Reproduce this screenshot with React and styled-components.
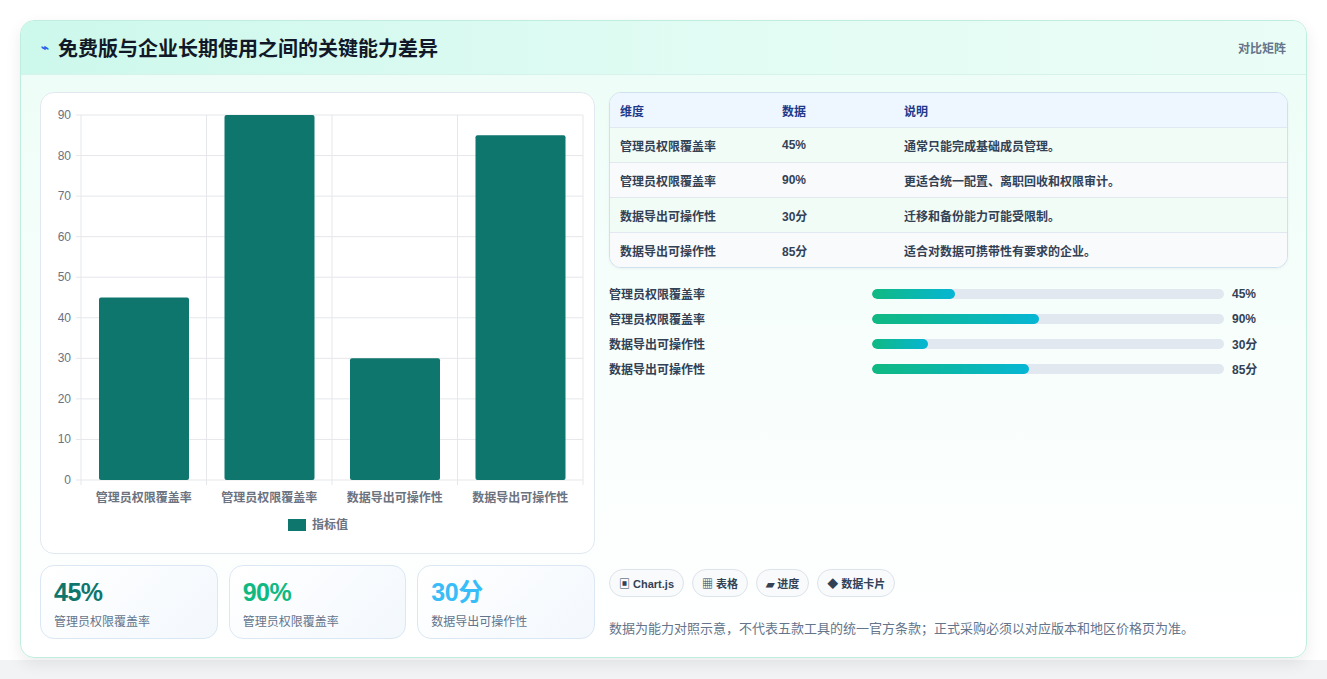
import React from "react";
import styled, { createGlobalStyle } from "styled-components";

const Global = createGlobalStyle`
  html, body { margin: 0; padding: 0; background: #f1f3f4; }
  body { font-family: "Liberation Sans", "Noto Sans CJK SC", sans-serif; }
  * { box-sizing: border-box; }
`;

const Page = styled.div`
  padding: 20px 20px 21px 20px;
  background: linear-gradient(#ffffff 0, #ffffff 660px, #f1f3f4 660px);
`;
const Card = styled.div`
  width: 1287px;
  height: 638px;
  border: 1px solid #bfeee0;
  border-radius: 14px;
  background: linear-gradient(180deg, #ecfdf6 0%, #f6fefb 45%, #ffffff 100%);
  box-shadow: 0 6px 16px rgba(0,0,0,0.08);
  overflow: hidden;
  display: flex;
  flex-direction: column;
`;
const Header = styled.div`
  height: 55px;
  display: flex;
  align-items: center;
  justify-content: space-between;
  padding: 0 20px;
  background: linear-gradient(90deg, #cdf8ec, #e3fcf4 60%, #eafdf6);
  border-bottom: 1px solid #d5f3ea;
`;
const Title = styled.h2`
  margin: 0;
  font-size: 20px;
  font-weight: 700;
  color: #111827;
  display: flex;
  align-items: center;
  gap: 9px;
`;
const Bolt = styled.span`
  color: #2563eb;
  font-size: 13px;
`;
const Tag = styled.span`
  font-size: 12px;
  color: #64748b;
  font-weight: 700;
`;
const Body = styled.div`
  flex: 1;
  display: grid;
  grid-template-columns: 555px 679px;
  gap: 14px;
  padding: 17px 18px 18px 19px;
`;
const Col = styled.div`
  display: flex;
  flex-direction: column;
  gap: 11px;
`;
const ChartCard = styled.div`
  height: 462px;
  background: #fff;
  border: 1px solid #e2e8f0;
  border-radius: 14px;
`;
const Stats = styled.div`
  display: grid;
  grid-template-columns: repeat(3, 1fr);
  gap: 11px;
`;
const Stat = styled.div`
  height: 74px;
  border: 1px solid #dbe7f3;
  border-radius: 14px;
  background: linear-gradient(135deg, #ffffff, #f3f8fd);
  padding: 10px 13px;
`;
const StatNum = styled.div`
  font-size: 25px;
  font-weight: 700;
  letter-spacing: -0.5px;
  color: ${p => p.$c};
  line-height: 32px;
`;
const StatLabel = styled.div`
  font-size: 12px;
  color: #64748b;
  margin-top: 4px;
`;
const Table = styled.div`
  border: 1px solid #cfe0ee;
  border-radius: 12px;
  overflow: hidden;
  background: #fff;
  box-shadow: 0 1px 3px rgba(0,0,0,0.05);
`;
const Row = styled.div`
  display: grid;
  grid-template-columns: 162px 122px 1fr;
  align-items: center;
  height: ${p => (p.$head ? 34 : 35)}px;
  padding: 0 10px;
  font-size: 12px;
  font-weight: 700;
  color: ${p => (p.$head ? "#1e3a8a" : "#334155")};
  background: ${p => (p.$head ? "#eef6ff" : p.$alt ? "#f8fafc" : "#f1fcf7")};
  border-top: ${p => (p.$head ? "none" : "1px solid #e2e8f0")};
`;
const Bars = styled.div`
  display: flex;
  flex-direction: column;
  gap: 9px;
  margin-top: 6px;
`;
const BarRow = styled.div`
  display: grid;
  grid-template-columns: 255px 352px 1fr;
  align-items: center;
  column-gap: 8px;
  height: 16px;
  font-size: 12px;
  font-weight: 700;
  color: #334155;
`;
const Track = styled.div`
  height: 10px;
  border-radius: 5px;
  background: #e2e8f0;
  overflow: hidden;
`;
const Fill = styled.div`
  height: 100%;
  border-radius: 5px;
  background: linear-gradient(90deg, #10b981, #06b6d4);
`;
const Spacer = styled.div`flex: 1;`;
const Chips = styled.div`
  display: flex;
  gap: 8px;
`;
const Chip = styled.span`
  height: 28px;
  padding: 0 9px;
  border: 1px solid #dde3ea;
  border-radius: 14px;
  background: #f8fafc;
  font-size: 11px;
  font-weight: 700;
  color: #334155;
  display: inline-flex;
  align-items: center;
  gap: 3px;
`;
const Note = styled.p`
  margin: 10px 0 2px;
  font-size: 13px;
  color: #64748b;
`;

const labels = ["管理员权限覆盖率", "管理员权限覆盖率", "数据导出可操作性", "数据导出可操作性"];
const vals = [45, 90, 30, 85];

function Chart() {
  const L = 40, T = 22, R = 542, B = 387;
  const h = B - T, w = R - L, cw = w / 4;
  const y = v => B - (v / 90) * h;
  return (
    <svg width="554" height="460" style={{ display: "block" }}>
      {[0, 10, 20, 30, 40, 50, 60, 70, 80, 90].map(v => (
        <g key={v}>
          <line x1={L - 5} x2={R} y1={y(v)} y2={y(v)} stroke="#e5e7eb" />
          <text x={L - 10} y={y(v) + 4} fontSize="12" fill="#6b7280" textAnchor="end" fontFamily="Liberation Sans">{v}</text>
        </g>
      ))}
      {[0, 1, 2, 3, 4].map(i => (
        <line key={i} x1={L + i * cw} x2={L + i * cw} y1={T} y2={B + 5} stroke="#e5e7eb" />
      ))}
      {vals.map((v, i) => (
        <g key={i}>
          <rect x={L + i * cw + 18} y={y(v)} width={90} height={B - y(v)} rx="2" fill="#0f766e" />
          <text x={L + i * cw + cw / 2} y={409} fontSize="12" fontWeight="700" fill="#6b7280" textAnchor="middle" fontFamily="Liberation Sans, Noto Sans CJK SC">{labels[i]}</text>
        </g>
      ))}
      <rect x="247" y="426" width="18" height="12" fill="#0f766e" />
      <text x="271" y="436" fontSize="12" fontWeight="700" fill="#6b7280" fontFamily="Liberation Sans, Noto Sans CJK SC">指标值</text>
    </svg>
  );
}

const rows = [
  ["管理员权限覆盖率", "45%", "通常只能完成基础成员管理。"],
  ["管理员权限覆盖率", "90%", "更适合统一配置、离职回收和权限审计。"],
  ["数据导出可操作性", "30分", "迁移和备份能力可能受限制。"],
  ["数据导出可操作性", "85分", "适合对数据可携带性有要求的企业。"],
];

export default function App() {
  return (
    <Page>
      <Global />
      <Card>
        <Header>
          <Title><Bolt>⌁</Bolt>免费版与企业长期使用之间的关键能力差异</Title>
          <Tag>对比矩阵</Tag>
        </Header>
        <Body>
          <Col>
            <ChartCard><Chart /></ChartCard>
            <Stats>
              <Stat><StatNum $c="#0f766e">45%</StatNum><StatLabel>管理员权限覆盖率</StatLabel></Stat>
              <Stat><StatNum $c="#10b981">90%</StatNum><StatLabel>管理员权限覆盖率</StatLabel></Stat>
              <Stat><StatNum $c="#38bdf8">30分</StatNum><StatLabel>数据导出可操作性</StatLabel></Stat>
            </Stats>
          </Col>
          <Col>
            <Table>
              <Row $head><span>维度</span><span>数据</span><span>说明</span></Row>
              {rows.map((r, i) => (
                <Row key={i} $alt={i % 2 === 1}><span>{r[0]}</span><span>{r[1]}</span><span>{r[2]}</span></Row>
              ))}
            </Table>
            <Bars>
              {rows.map((r, i) => (
                <BarRow key={i}>
                  <span>{r[0]}</span>
                  <Track><Fill style={{ width: `${(vals[i] / 190) * 100}%` }} /></Track>
                  <span>{r[1]}</span>
                </BarRow>
              ))}
            </Bars>
            <Spacer />
            <Chips>
              <Chip>▣ Chart.js</Chip>
              <Chip>▦ 表格</Chip>
              <Chip>▰ 进度</Chip>
              <Chip>◆ 数据卡片</Chip>
            </Chips>
            <Note>数据为能力对照示意，不代表五款工具的统一官方条款；正式采购必须以对应版本和地区价格页为准。</Note>
          </Col>
        </Body>
      </Card>
    </Page>
  );
}
